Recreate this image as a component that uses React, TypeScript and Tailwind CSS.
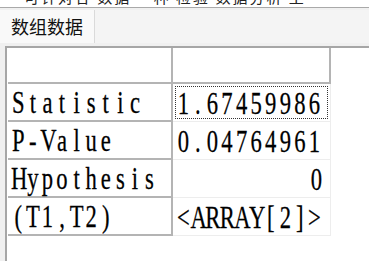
import React from 'react';

const rows = [
  { label: 'Statistic', value: '1.67459986', align: 'left', focus: true },
  { label: 'P-Value', value: '0.04764961', align: 'left', focus: false },
  { label: 'Hypothesis', value: '0', align: 'right', focus: false },
  { label: '(T1,T2)', value: '<ARRAY[2]>', align: 'left', focus: false },
];

const CELL = 14.6;

// SimSun-like half-width text: serif glyphs in fixed cells
const Mono: React.FC<{ text: string; right?: boolean }> = ({ text, right }) => (
  <span className="relative inline-flex h-[24px] shrink-0" style={{ width: text.length * CELL }}>
    <span
      className={
        right
          ? "absolute right-0 top-0 inline-flex origin-right scale-x-78 scale-y-112 font-['Liberation_Serif',serif] text-[29px] leading-[24px] text-black [-webkit-text-stroke:0.25px_black]"
          : "absolute left-0 top-0 inline-flex origin-left scale-x-78 scale-y-112 font-['Liberation_Serif',serif] text-[29px] leading-[24px] text-black [-webkit-text-stroke:0.25px_black]"
      }
    >
      {text.split('').map((c, i) => (
        <span key={i} className="inline-block w-[18.7px] text-center">
          {c}
        </span>
      ))}
    </span>
  </span>
);

export default function App() {
  return (
    <div className="flex h-[261px] w-[369px] flex-col overflow-hidden bg-[#f0f0f0] font-['Noto_Sans_CJK_SC',sans-serif]">
      {/* clipped row of the window above */}
      <div className="relative h-[8px] shrink-0 overflow-hidden border-b border-[#a9a9a9] bg-white">
        <div className="absolute -top-[11px] left-[24px] whitespace-nowrap text-[15px] leading-[16px] tracking-[2px] text-[#222]">
          可针对各 数据 一种 检验 数据分析 工
        </div>
      </div>

      {/* tab strip */}
      <div className="flex h-[35px] shrink-0 items-end">
        <div className="flex h-[33px] w-[95px] items-center border-r border-[#dadada] bg-[#f9f9f9] pl-[11px] text-[18px] text-[#111]">
          数组数据
        </div>
        <div className="h-[33px] flex-1 bg-[#f4f4f4]" />
      </div>

      {/* panel */}
      <div className="mt-[3px] ml-[5px] flex-1 border-l-2 border-t-2 border-[#a6a6a6] bg-white pl-[1px]">
        <div className="grid grid-cols-[165px_158px]">
          <div className="h-[36px] border-r-2 border-b-2 border-[#b4b4b4]" />
          <div className="h-[36px] border-r-2 border-b-2 border-[#b4b4b4]" />
          {rows.map((r) => (
            <React.Fragment key={r.label}>
              <div className="flex h-[38px] items-center border-r-2 border-b-2 border-[#b4b4b4] pl-[3px]">
                <Mono text={r.label} />
              </div>
              <div className="flex h-[38px] min-w-0 items-stretch border-r border-b border-[#ededed] p-[2px]">
                <div
                  className={
                    r.focus
                      ? 'flex min-w-0 flex-1 items-center border border-dotted border-[#333]'
                      : r.align === 'right'
                        ? 'flex min-w-0 flex-1 items-center justify-end pr-[4px]'
                        : 'flex min-w-0 flex-1 items-center pl-[1px]'
                  }
                >
                  <Mono text={r.value} right={r.align === 'right'} />
                </div>
              </div>
            </React.Fragment>
          ))}
        </div>
      </div>
    </div>
  );
}
